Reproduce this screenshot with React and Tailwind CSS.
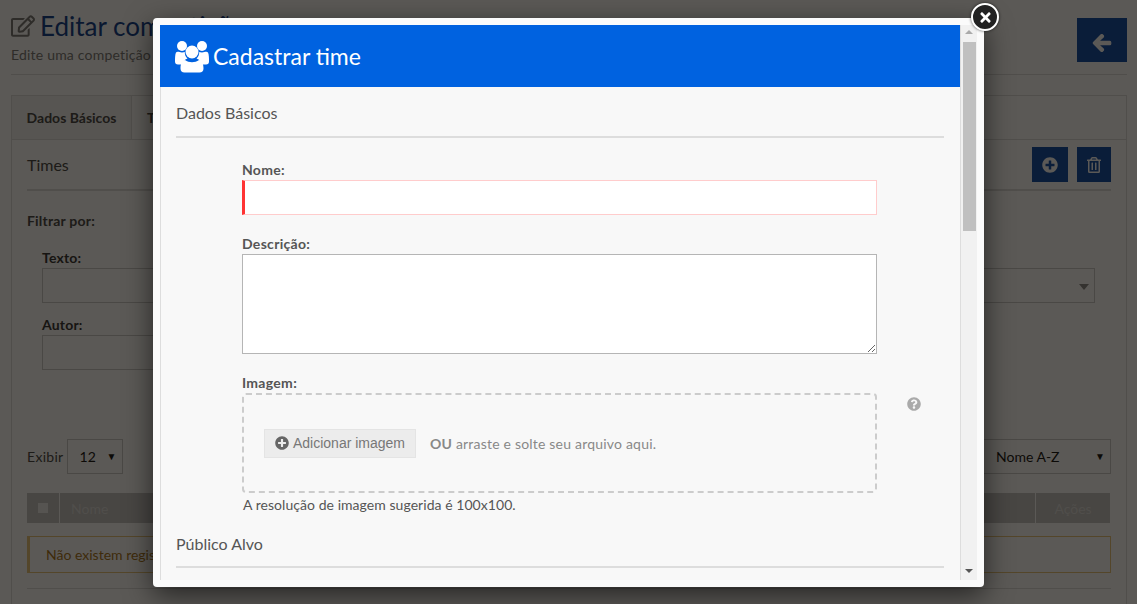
import { FaArrowLeft, FaPlusCircle, FaQuestionCircle, FaRegEdit, FaRegTrashAlt, FaTimes } from 'react-icons/fa';

function UsersIcon() {
  return (
    <svg width="34" height="33" viewBox="0 0 34 33" fill="white">
      <circle cx="7" cy="6" r="5" />
      <circle cx="27" cy="6" r="5" />
      <path d="M1 12.5c1.500-1.500 3.500 0 6 0 1.200 0 2-.3 2.800-.5-.2 2.500 1 5 2.700 6.500-3 1-5 3.500-5.500 6H3c-2 0-3-1-3-3 0-3 0-7 1-9z" />
      <path d="M33 12.500c-1.500-1.500-3.500 0-6 0-1.200 0-2-.3-2.800-.5.2 2.500-1 5-2.700 6.500 3 1 5 3.500 5.500 6H31c2 0 3-1 3-3 0-3 0-7-1-9z" />
      <circle cx="17" cy="12" r="6.500" />
      <path d="M10 20c2 1.500 4.500 2.200 7 2.200s5-.7 7-2.200c3 .5 4.500 4 4.500 8.500 0 2.500-1.500 4-4 4h-15c-2.500 0-4-1.500-4-4 0-4.500 1.500-8 4.500-8.500z" />
    </svg>
  );
}

function Field({ label, children }) {
  return (
    <div>
      <div className="font-bold text-[#333] text-[14px] leading-5 tracking-[0.2px]">{label}</div>
      {children}
    </div>
  );
}

function Page() {
  return (
    <div className="h-[604px] overflow-hidden bg-white pl-[11px] pr-[10px] pt-[10px] text-[#444]">
      <div className="flex justify-between border-b border-[#ddd] h-[65px]">
        <div>
          <div className="flex items-center gap-[5px] h-[32px]">
            <FaRegEdit className="text-[#777] text-[24px]" />
            <span className="text-[#0a3a8c] text-[26px] leading-8">Editar competição</span>
          </div>
          <div className="text-[14px] mt-0.5 text-[#777] tracking-[0.2px]">Edite uma competição</div>
        </div>
        <div className="flex items-center justify-center w-[50px] h-[44px] mt-2 pt-1.5 bg-[#0a4aa8]">
          <FaArrowLeft className="text-white text-[20px] stroke-white stroke-[30]" />
        </div>
      </div>

      <div className="mt-5 border border-[#ddd] h-[600px]">
        <div className="flex h-[44px]">
          <div className="w-[120px] border-r border-b border-[#ddd] bg-[#f3f3f3] flex items-center justify-center font-bold text-[14px]">Dados Básicos</div>
          <div className="flex-1 border-b border-[#ddd] pl-[15px] flex items-center font-bold text-[14px]">Times</div>
        </div>
        <div className="px-[15px]">
          <div className="flex items-center justify-between h-[50px] border-b-2 border-[#ddd] mt-px">
            <span className="text-[16px]">Times</span>
            <div className="flex gap-[9px] pb-px">
              <div className="flex items-center justify-center w-[36px] h-[35px] bg-[#0a4aa8]"><FaPlusCircle className="text-white text-[16px]" /></div>
              <div className="flex items-center justify-center w-[34px] h-[35px] bg-[#0a4aa8]"><FaRegTrashAlt className="text-white text-[16px]" /></div>
            </div>
          </div>
          <div className="font-bold text-[14px] mt-[20px] leading-5 tracking-[0.2px]">Filtrar por:</div>
          <div className="grid grid-cols-2 gap-x-6 pl-[15px] pr-[16px] mt-[17px]">
            <Field label="Texto:"><div className="h-[35px] border border-[#ccc]" /></Field>
            <Field label="Categoria:">
              <div className="relative h-[35px] border border-[#ccc]">
                <span className="absolute right-[5px] top-[15px] border-x-[5px] border-t-[6px] border-x-transparent border-t-[#888]" />
              </div>
            </Field>
            <div className="mt-[12px]"><Field label="Autor:"><div className="h-[35px] border border-[#ccc]" /></Field></div>
          </div>
          <div className="flex items-center justify-between mt-[69px] h-[35px]">
            <div className="flex items-center gap-[3px]">
              <span className="text-[14px] tracking-[0.3px]">Exibir</span>
              <div className="flex items-center justify-between w-[56px] h-[35px] border border-[#ccc] pl-3 pr-[5px] text-[#111] text-[14px]">
                12<span className="text-[10px]">▼</span>
              </div>
            </div>
            <div className="flex items-center justify-between w-[300px] h-[35px] border border-[#ccc] pl-[184px] pr-[5px] text-[#111] text-[14px]">
              Nome A-Z<span className="text-[10px]">▼</span>
            </div>
          </div>
          <div className="flex h-[30px] mt-[19px] mr-px bg-[#c4c4c4] text-[#ddd] text-[14px]">
            <div className="flex items-center justify-center w-[33px] border-r border-white"><span className="w-2.5 h-2.5 bg-[#eee]" /></div>
            <div className="flex-1 flex items-center pl-[11px]">Nome</div>
            <div className="flex items-center justify-center w-[75px] border-l border-white">Ações</div>
          </div>
          <div className="flex items-center h-[37px] mt-[13px] border border-[#e8c47a] border-l-[3px] pl-[16px] text-[#a8741a] text-[14px]">Não existem registros.</div>
          <div className="mt-[15px] border-b border-[#ddd]" />
        </div>
      </div>
    </div>
  );
}

function Modal() {
  return (
    <div className="absolute left-[153px] top-[18px] w-[831px] h-[569px] bg-[#fbfbfb] rounded-[4px] p-[7px] shadow-[0_8px_28px_rgba(0,0,0,0.6)]">
      <div className="flex h-[555px] overflow-hidden">
        <div className="w-[800px] bg-[#f8f8f8] overflow-hidden">
          <div className="flex items-center gap-[4px] h-[62px] pl-[15px] bg-[#0062e0] text-white text-[23px]">
            <UsersIcon />
            <span>Cadastrar time</span>
          </div>
          <div className="h-[493px] border-l border-[#ddd] pl-[15px] pr-[16px] text-[#555]">
            <div className="h-[51px] pt-[15px] border-b-2 border-[#ddd] text-[16px] leading-[22px]">Dados Básicos</div>
            <div className="ml-[66px] w-[635px] text-[14px]">
              <div className="mt-[22px] font-bold leading-5 tracking-[0.3px]">Nome:</div>
              <div className="h-[35px] bg-white border border-[#fcc] border-l-[3px] border-l-[#f33]" />
              <div className="mt-[19px] font-bold leading-5 tracking-[0.3px]">Descrição:</div>
              <textarea className="block w-full h-[100px] bg-white border border-[#b5b5b5] outline-none" />
              <div className="mt-[19px] font-bold leading-5 tracking-[0.3px]">Imagem:</div>
              <div className="relative">
                <div className="flex items-center h-[100px] border-2 border-dashed border-[#ccc] rounded-[4px] pl-[20px]">
                  <div className="flex items-center gap-1 h-[29px] w-[152px] justify-center bg-[#ececec] border border-[#e4e4e4] text-[#777] text-[14px] font-['Liberation_Sans',sans-serif]">
                    <FaPlusCircle className="text-[#666] text-[14px]" />
                    Adicionar imagem
                  </div>
                  <div className="ml-[14px] text-[#888] tracking-[0.2px]"><b>OU</b> arraste e solte seu arquivo aqui.</div>
                </div>
                <FaQuestionCircle className="absolute left-[665px] top-[4px] text-[#aaa] text-[14px]" />
              </div>
              <div className="mt-[2px] ml-px leading-5 tracking-[0.05px]">A resolução de imagem sugerida é 100x100.</div>
            </div>
            <div className="h-[53px] pt-[18px] border-b-2 border-[#ddd] text-[16px] leading-[22px]">Público Alvo</div>
          </div>
        </div>
        <div className="flex flex-col items-center w-[17px] bg-[#f1f1f1] border-l border-[#ddd]">
          <span className="mt-[5px] border-x-[4px] border-b-[4px] border-x-transparent border-b-[#aaa]" />
          <div className="w-[13px] h-[189px] mt-[8px] bg-[#c0c0c0]" />
          <span className="mt-auto mb-[7px] border-x-[4px] border-t-[4px] border-x-transparent border-t-[#555]" />
        </div>
      </div>
      <div className="absolute right-[-15px] top-[-15px] flex items-center justify-center w-[28px] h-[28px] rounded-full bg-[#222] border-2 border-white shadow-[0_0_3px_rgba(0,0,0,0.7)]">
        <FaTimes className="text-white text-[15px]" />
      </div>
    </div>
  );
}

export default function App() {
  return (
    <div className="relative h-[604px] overflow-hidden font-['Lato',sans-serif]">
      <Page />
      <div className="absolute inset-0 bg-[rgba(10,7,3,0.67)]" />
      <Modal />
    </div>
  );
}
